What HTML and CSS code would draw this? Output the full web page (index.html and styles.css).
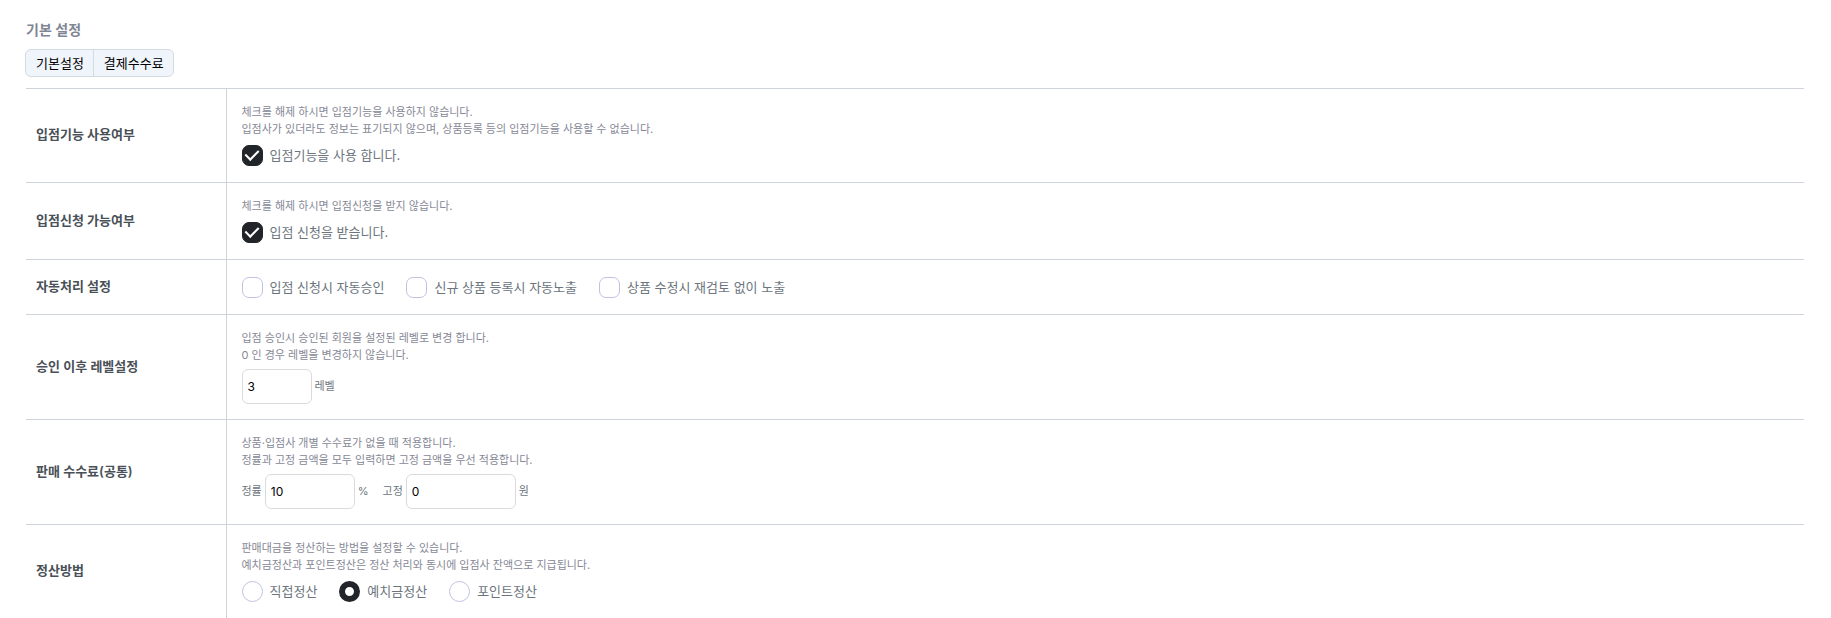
FILE: index.html
```html
<!DOCTYPE html>
<html lang="ko">
<head>
<meta charset="utf-8">
<title>기본 설정</title>
<link rel="stylesheet" href="styles.css">
</head>
<body>
<main class="page">
  <h1 class="title">기본 설정</h1>
  <nav class="tabs">
    <a class="tab" href="#basic">기본설정</a>
    <a class="tab" href="#fee">결제수수료</a>
  </nav>
  <form>
    <table class="settings" id="basic">
      <tbody>
        <tr>
          <th scope="row">입점기능 사용여부</th>
          <td>
            <p class="help">체크를 해제 하시면 입점기능을 사용하지 않습니다.<br>입점사가 있더라도 정보는 표기되지 않으며, 상품등록 등의 입점기능을 사용할 수 없습니다.</p>
            <div class="choices">
              <label class="choice"><input class="check" type="checkbox" checked>입점기능을 사용 합니다.</label>
            </div>
          </td>
        </tr>
        <tr>
          <th scope="row">입점신청 가능여부</th>
          <td>
            <p class="help">체크를 해제 하시면 입점신청을 받지 않습니다.</p>
            <div class="choices">
              <label class="choice"><input class="check" type="checkbox" checked>입점 신청을 받습니다.</label>
            </div>
          </td>
        </tr>
        <tr>
          <th scope="row">자동처리 설정</th>
          <td>
            <div class="choices">
              <label class="choice"><input class="check" type="checkbox">입점 신청시 자동승인</label>
              <label class="choice"><input class="check" type="checkbox">신규 상품 등록시 자동노출</label>
              <label class="choice"><input class="check" type="checkbox">상품 수정시 재검토 없이 노출</label>
            </div>
          </td>
        </tr>
        <tr>
          <th scope="row">승인 이후 레벨설정</th>
          <td>
            <p class="help">입점 승인시 승인된 회원을 설정된 레벨로 변경 합니다.<br>0 인 경우 레벨을 변경하지 않습니다.</p>
            <div class="fields">
              <span class="field"><input class="text text-s" type="text" id="level" value="3"><label for="level">레벨</label></span>
            </div>
          </td>
        </tr>
        <tr>
          <th scope="row">판매 수수료(공통)</th>
          <td>
            <p class="help">상품·입점사 개별 수수료가 없을 때 적용합니다.<br>정률과 고정 금액을 모두 입력하면 고정 금액을 우선 적용합니다.</p>
            <div class="fields">
              <span class="field"><label for="rate">정률</label><input class="text text-m" type="text" id="rate" value="10">%</span>
              <span class="field"><label for="fixed">고정</label><input class="text text-l" type="text" id="fixed" value="0">원</span>
            </div>
          </td>
        </tr>
        <tr>
          <th scope="row">정산방법</th>
          <td>
            <p class="help">판매대금을 정산하는 방법을 설정할 수 있습니다.<br>예치금정산과 포인트정산은 정산 처리와 동시에 입점사 잔액으로 지급됩니다.</p>
            <div class="choices">
              <label class="choice"><input class="radio" type="radio" name="settle">직접정산</label>
              <label class="choice"><input class="radio" type="radio" name="settle" checked>예치금정산</label>
              <label class="choice"><input class="radio" type="radio" name="settle">포인트정산</label>
            </div>
          </td>
        </tr>
      </tbody>
    </table>
  </form>
</main>
</body>
</html>
```
FILE: styles.css
```css
* {
  box-sizing: border-box;
}

body {
  margin: 0;
  background: #fff;
  color: #6c757d;
  font-family: Inter, "Noto Sans CJK KR", sans-serif;
  font-size: 13px;
  line-height: 17px;
}

.page {
  padding: 20px 27px 0 26px;
}

.title {
  margin: 0 0 9px;
  color: #7f8694;
  font-size: 14px;
  font-weight: 600;
  line-height: 20px;
}

.tabs {
  display: inline-flex;
  margin: 0 0 11px -1px;
  border: 1px solid #d3dae0;
  border-radius: 6px;
  background: #eff5fa;
  overflow: hidden;
  vertical-align: top;
}

.tab {
  padding: 0 9px 0 10px;
  color: #000;
  line-height: 26px;
  text-decoration: none;
}

.tab + .tab {
  border-left: 1px solid #d3dae0;
}

.settings {
  width: 100%;
  border-collapse: collapse;
  border-top: 1px solid #ced4da;
}

.settings th,
.settings td {
  border-bottom: 1px solid #ced4da;
  vertical-align: middle;
  text-align: left;
}

.settings th {
  width: 200px;
  padding: 0 10px 2px;
  color: #495057;
  font-weight: 600;
}

.settings td {
  padding: 15px;
  border-left: 1px solid #ced4da;
}

.help {
  margin: 0 0 5px;
  color: #868896;
  font-size: 11px;
}

.choices {
  display: flex;
  flex-wrap: wrap;
  gap: 0 22px;
}

.choice {
  display: flex;
  align-items: center;
  gap: 7px;
  min-height: 24px;
}

.check,
.radio {
  display: grid;
  place-content: center;
  width: 21px;
  height: 21px;
  margin: 0;
  border: 1px solid #bfc2e2;
  background: #fff;
  appearance: none;
}

.check {
  border-radius: 7px;
}

.radio {
  border-radius: 50%;
}

.check:checked {
  border-color: #212529;
  background: #212529;
}

.check:checked::before {
  content: "";
  width: 6px;
  height: 11px;
  margin-bottom: 3px;
  border: solid #fff;
  border-width: 0 2px 2px 0;
  transform: rotate(45deg);
}

.radio:checked {
  border: 6px solid #212529;
}

.fields {
  display: flex;
  flex-wrap: wrap;
  gap: 14px;
  font-size: 11px;
}

.field {
  display: flex;
  align-items: center;
  gap: 3px;
}

.text {
  height: 35px;
  padding: 0 5px;
  border: 1px solid #dadbdd;
  border-radius: 6px;
  background: #fff;
  color: #000;
  font-family: inherit;
  font-size: 12px;
}

.text-s {
  width: 70px;
}

.text-m {
  width: 90px;
}

.text-l {
  width: 110px;
}
```
